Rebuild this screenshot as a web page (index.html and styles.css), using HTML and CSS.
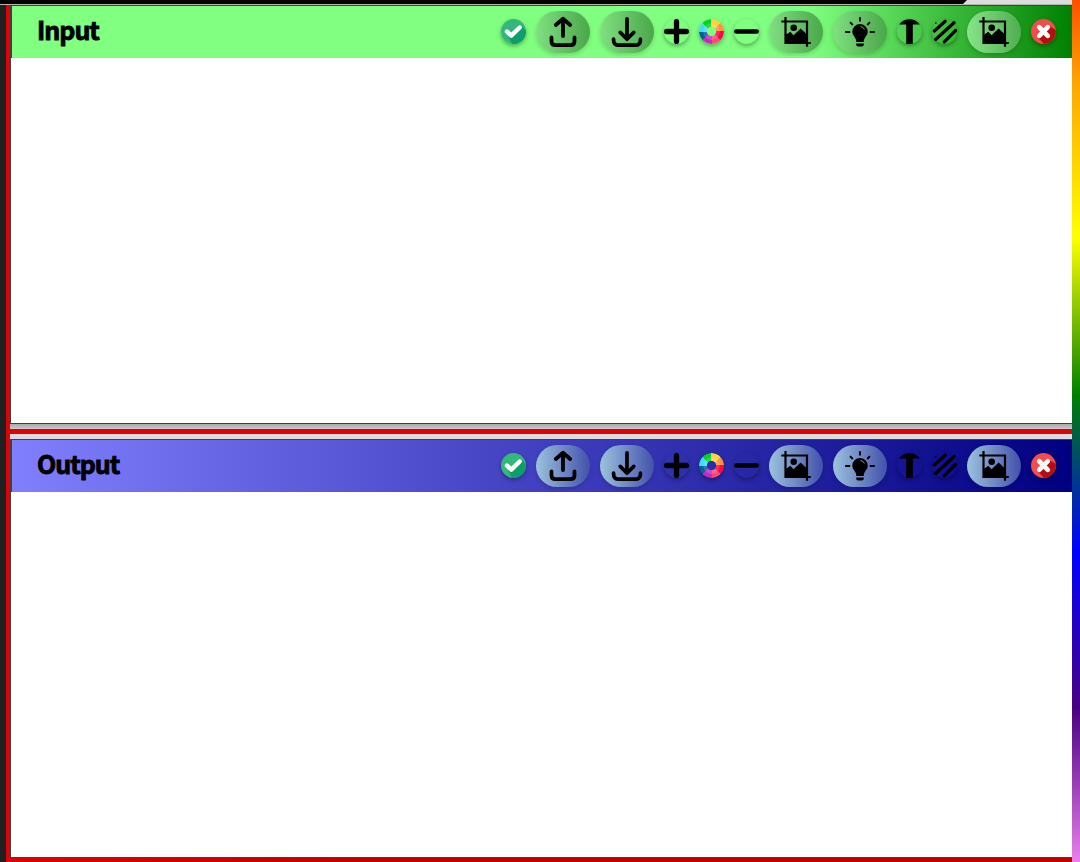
FILE: index.html
```html
<!DOCTYPE html>
<html lang="en">
<head>
<meta charset="utf-8">
<title>Input / Output</title>
<link rel="stylesheet" href="styles.css">
</head>
<body>
<svg class="defs" aria-hidden="true">
  <symbol id="check" viewBox="0 0 25 25"><circle cx="12.5" cy="12.5" r="12.5" fill="#33b87c"/><path d="M21 7 25 12A12.5 12.5 0 0 1 11 25L7 17Z" fill="#0c9e6b"/><path d="M6 12.6 10.3 16.6 18.7 8.5" fill="none" stroke="#fff" stroke-width="4.4" stroke-linecap="round" stroke-linejoin="round"/></symbol>
  <symbol id="close" viewBox="0 0 25 25"><circle cx="12.5" cy="12.5" r="12.5" fill="#f34c4c"/><path d="M18.5 7 24.8 11A12.5 12.5 0 0 1 13 25L7 18.5Z" fill="#b40f0f"/><path d="m8.2 8.2 8.6 8.6m0-8.6-8.6 8.6" stroke="#fff" stroke-width="4.7" stroke-linecap="round"/></symbol>
  <symbol id="plus" viewBox="0 0 25 25"><path d="M12.5 2.6v19.8M2.6 12.5h19.8" stroke="#000" stroke-width="5.3" stroke-linecap="round"/></symbol>
  <symbol id="minus" viewBox="0 0 25 25"><path d="M2.2 12.5h20.6" stroke="#000" stroke-width="4.4" stroke-linecap="round"/></symbol>
  <symbol id="type" viewBox="0 0 25 25"><path d="M2.2 5.6A12.5 12.5 0 0 1 22.8 5.6H15.8V24.7Q12.5 25.4 9.2 24.7V5.6Z"/></symbol>
  <symbol id="hatch" viewBox="0 0 25 25"><path d="M2.3 12 13.2 2.2M3.8 20.3 22 3.7M12.3 22.8 23.6 11.5" stroke="#000" stroke-width="3.2" stroke-linecap="round"/><circle cx="3.9" cy="4" r=".8"/></symbol>
  <symbol id="upload" viewBox="0 0 54 42"><path d="M15.5 26.5v3.7q0 4 4 4h15q4 0 4-4v-3.7M27 25V8.5M19.8 14 27 7.7 34.2 14" fill="none" stroke="#000" stroke-width="3.8" stroke-linecap="round" stroke-linejoin="round"/></symbol>
  <symbol id="download" viewBox="0 0 54 42"><path d="M13.6 28.2v1q0 5 5.2 5h16.4q5.2 0 5.2-5v-1M27 7.8V28M20.2 21.4 27 28.2l6.8-6.8" fill="none" stroke="#000" stroke-width="3.7" stroke-linecap="round" stroke-linejoin="round"/></symbol>
  <symbol id="image" viewBox="0 0 54 42"><path d="M12.3 10.5H38v25.3M16.5 6v26H41.8" fill="none" stroke="#000" stroke-width="2.2"/><circle cx="24.7" cy="16.7" r="3.3"/><path d="M17 26.5V23.8L21.3 20.8 24.6 24.2 31.6 17.4 38 23.5V32H17Z"/></symbol>
  <symbol id="bulb" viewBox="0 0 54 42"><path d="M27 13a7.7 7.7 0 0 0-7.7 7.7c0 4 4 5.6 4 10.2h7.4c0-4.6 4-6.2 4-10.2A7.7 7.7 0 0 0 27 13Z"/><path d="M23.2 32.4h7.6v1q0 2-2 2h-3.6q-2 0-2-2Z"/><path d="M27 6.3v4.3M12.2 21h5M36.8 21h5M17 11.2l2.8 2.8M37 11.2l-2.8 2.8" stroke="#000" stroke-width="1.9"/><path d="M27.5 15.6q3 .1 3.9 3" fill="none" stroke="#65a076" stroke-width="1"/></symbol>
</svg>
<div class="workspace">
  <div class="titlebar"><div class="titlebar-tab"></div></div>
  <div class="main">
    <div class="rail"></div>
    <div class="panels">
      <section class="panel input">
        <header class="bar">
          <h2 class="title">Input</h2>
          <div class="tools">
            <button class="round"><svg><use href="#check"/></svg></button>
            <button class="pill"><svg><use href="#upload"/></svg></button>
            <button class="pill"><svg><use href="#download"/></svg></button>
            <button class="round"><svg><use href="#plus"/></svg></button>
            <button class="round"><span class="wheel"></span></button>
            <button class="round"><svg><use href="#minus"/></svg></button>
            <button class="pill"><svg><use href="#image"/></svg></button>
            <button class="pill"><svg><use href="#bulb"/></svg></button>
            <button class="round"><svg><use href="#type"/></svg></button>
            <button class="round"><svg><use href="#hatch"/></svg></button>
            <button class="pill light"><svg><use href="#image"/></svg></button>
            <button class="round"><svg><use href="#close"/></svg></button>
          </div>
        </header>
        <div class="content"></div>
      </section>
      <div class="divider"></div>
      <section class="panel output">
        <header class="bar">
          <h2 class="title">Output</h2>
          <div class="tools">
            <button class="round"><svg><use href="#check"/></svg></button>
            <button class="pill"><svg><use href="#upload"/></svg></button>
            <button class="pill"><svg><use href="#download"/></svg></button>
            <button class="round"><svg><use href="#plus"/></svg></button>
            <button class="round"><span class="wheel"></span></button>
            <button class="round"><svg><use href="#minus"/></svg></button>
            <button class="pill"><svg><use href="#image"/></svg></button>
            <button class="pill"><svg><use href="#bulb"/></svg></button>
            <button class="round"><svg><use href="#type"/></svg></button>
            <button class="round"><svg><use href="#hatch"/></svg></button>
            <button class="pill"><svg><use href="#image"/></svg></button>
            <button class="round"><svg><use href="#close"/></svg></button>
          </div>
        </header>
        <div class="content"></div>
      </section>
      <div class="bottom"></div>
    </div>
  </div>
</div>
<div class="rainbow"></div>
</body>
</html>
```

FILE: styles.css
```css
* { box-sizing: border-box; }
body { margin: 0; display: flex; height: 862px; overflow: hidden; background: #e00008; }
.defs { display: none; }
.workspace { flex: 1; display: flex; flex-direction: column; }
.titlebar { height: 5px; background: #dcdcdc; border-bottom: 1px solid #b5b5b5; }
.titlebar-tab { width: 967px; height: 4px; background: #000; clip-path: polygon(0 0, 100% 0, 963px 100%, 0 100%); }
.main { flex: 1; display: flex; }
.rail { width: 10px; background: #202020; border-right: 4px solid #e00008; }
.panels { flex: 1; display: flex; flex-direction: column; }
.panel { height: 419px; display: flex; flex-direction: column; border: 1px solid #404040; border-right: 0; background: #fff; }
.bar { height: 52px; display: flex; align-items: center; justify-content: space-between; padding: 0 16px 0 25px; border-left: 1px solid #404040; }
.input .bar { background: linear-gradient(to right, #80ff80 0 75%, #008000); }
.output .bar { background: linear-gradient(to right, #8080ff, #000080); }
.title { margin: 0 0 7px; font: 700 25px/36px "Noto Sans CJK SC", sans-serif; letter-spacing: -1px; -webkit-text-stroke: .9px #000; color: #000; }
.tools { display: flex; align-items: center; gap: 10px; }
.tools button { display: block; padding: 0; border: 0; background: none; }
.tools svg { display: block; width: 100%; height: 100%; }
.tools .round { width: 25px; height: 25px; margin-bottom: 1px; border-radius: 50%; box-shadow: 0 2px 4px rgba(0, 0, 0, .35); }
.tools .pill { width: 54px; height: 42px; border-radius: 21px; background: linear-gradient(to right, #80df80, #4aa84a); box-shadow: 0 2px 4px rgba(0, 0, 0, .16); }
.input .tools .light { background: linear-gradient(to right, #88e488, #50ad50); }
.output .tools .pill { background: linear-gradient(to right, #9bc2dd, #4351ac); }
.wheel { display: block; height: 100%; border-radius: 50%; background:
  radial-gradient(circle, rgba(255, 255, 255, .15) 8px, transparent 8.5px),
  conic-gradient(#ffd23f 45deg, #ff923f 45deg 90deg, #f80849 90deg 135deg, #ff4776 135deg 180deg, #c12bc3 180deg 225deg, #075f96 225deg 270deg, #3edcf8 270deg 315deg, #05d323 315deg);
  mask: radial-gradient(circle, transparent 4.3px, #000 4.8px); }
.content { flex: 1; }
.divider { height: 15px; background: linear-gradient(#aaa, #cacaca 5px, #e00008 5px 10px, #dcdcdc 10px); }
.bottom { height: 4px; background: linear-gradient(to right, #e00008, #c00000 30%); }
.rainbow { width: 8px; background: linear-gradient(red -75px, orange 82px, yellow 238px, green 395px, blue 552px, indigo 708px, violet 865px); }
```
